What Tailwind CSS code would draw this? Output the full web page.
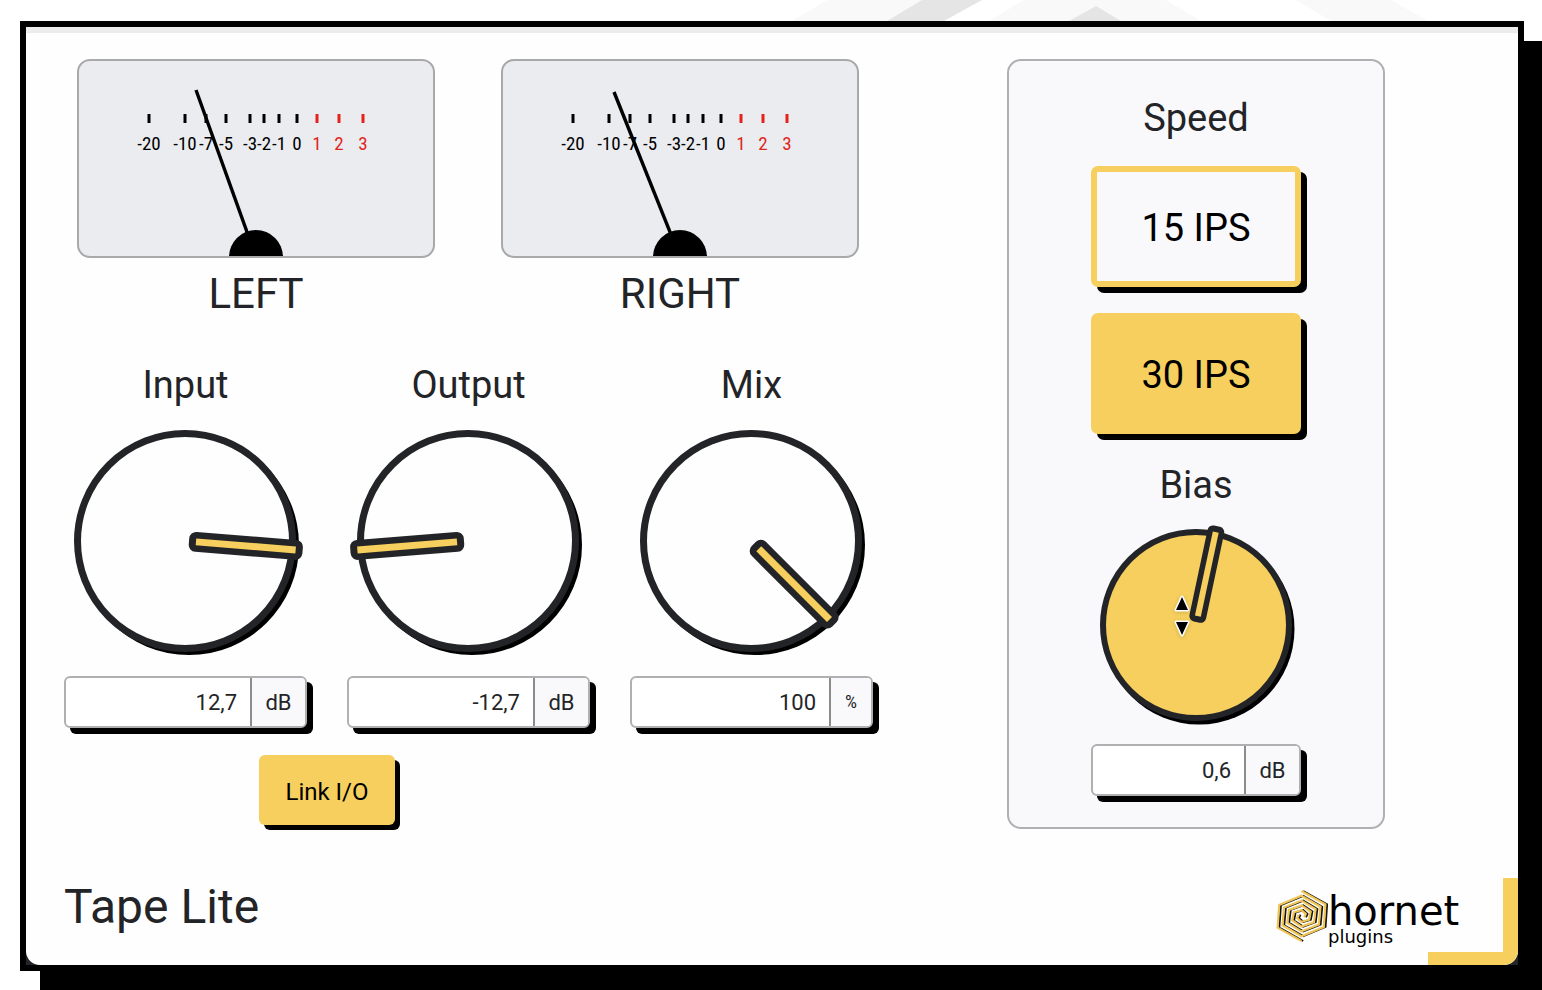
<!DOCTYPE html>
<html lang="en">
<head>
<meta charset="utf-8">
<title>Tape Lite</title>
<script src="https://cdn.jsdelivr.net/npm/@tailwindcss/browser@4"></script>
</head>
<body class="bg-white font-['Roboto',sans-serif] text-[#232427]">
<div class="relative min-h-screen overflow-hidden pt-[21px] pr-[18px] pl-5">
  <!-- background chevrons -->
  <svg class="absolute top-0 right-0 h-[40px] w-[782px]" viewBox="760 0 782 40" aria-hidden="true">
    <path fill="#f9f9f9" d="M827 0H922L887 21H792ZM1024 0H1166L1201 21H989ZM1296 0H1391L1428 21H1331Z"/>
    <path fill="#e5e5e5" d="M922 0H982L944 21H887ZM1096 6L1121 21H1069Z"/>
  </svg>

  <div class="relative border-[6px] border-black bg-[#232427] shadow-[20px_20px_0_#000]">
    <div class="relative overflow-hidden rounded-b-[14px] border-t-[6px] border-[#ececec] bg-[#fefefe]">
      <main class="flex items-start justify-between pt-[26px] pr-[133px] pl-[38px]">
        <section class="flex flex-col" aria-label="Levels">
          <div class="flex justify-center gap-[66px] pr-px">
            <figure class="w-[358px]">
              <div class="overflow-hidden rounded-[13px] border-2 border-[#a9a9ab] bg-[#ebecf0]">
                <svg class="block h-[195px] w-full" viewBox="2 2 354 195" role="img" aria-label="Left VU meter">
                  <path stroke="#000" stroke-width="3" d="M72 55v9M108 55v9M129 55v9M149 55v9M173 55v9M187 55v9M202 55v9M220 55v9"/>
                  <path stroke="#e0261c" stroke-width="3" d="M240 55v9M262 55v9M286 55v9"/>
                  <g class="font-['Liberation_Sans_Narrow','Roboto_Condensed',sans-serif] text-[19px]" text-anchor="middle">
                    <text x="72" y="91">-20</text><text x="108" y="91">-10</text><text x="129" y="91">-7</text><text x="149" y="91">-5</text><text x="173" y="91">-3</text><text x="187" y="91">-2</text><text x="202" y="91">-1</text><text x="220" y="91">0</text>
                    <g fill="#e0261c"><text x="240" y="91">1</text><text x="262" y="91">2</text><text x="286" y="91">3</text></g>
                  </g>
                  <path stroke="#000" stroke-width="3.4" d="M119 31L179 198"/>
                  <circle cx="179" cy="198" r="27"/>
                </svg>
              </div>
              <figcaption class="mt-4 text-center text-[42px] leading-10">LEFT</figcaption>
            </figure>
            <figure class="w-[358px]">
              <div class="overflow-hidden rounded-[13px] border-2 border-[#a9a9ab] bg-[#ebecf0]">
                <svg class="block h-[195px] w-full" viewBox="2 2 354 195" role="img" aria-label="Right VU meter">
                  <path stroke="#000" stroke-width="3" d="M72 55v9M108 55v9M129 55v9M149 55v9M173 55v9M187 55v9M202 55v9M220 55v9"/>
                  <path stroke="#e0261c" stroke-width="3" d="M240 55v9M262 55v9M286 55v9"/>
                  <g class="font-['Liberation_Sans_Narrow','Roboto_Condensed',sans-serif] text-[19px]" text-anchor="middle">
                    <text x="72" y="91">-20</text><text x="108" y="91">-10</text><text x="129" y="91">-7</text><text x="149" y="91">-5</text><text x="173" y="91">-3</text><text x="187" y="91">-2</text><text x="202" y="91">-1</text><text x="220" y="91">0</text>
                    <g fill="#e0261c"><text x="240" y="91">1</text><text x="262" y="91">2</text><text x="286" y="91">3</text></g>
                  </g>
                  <path stroke="#000" stroke-width="3.4" d="M113 33L179 198"/>
                  <circle cx="179" cy="198" r="27"/>
                </svg>
              </div>
              <figcaption class="mt-4 text-center text-[42px] leading-10">RIGHT</figcaption>
            </figure>
          </div>

          <div class="mt-[51px] flex gap-10">
            <div class="w-[243px]">
              <label for="input" class="block text-center text-[38px] leading-10">Input</label>
              <div class="relative mt-5">
                <svg class="block h-[236px] w-full overflow-visible" viewBox="0 0 243 236" aria-hidden="true">
                  <circle cx="125" cy="120" r="110"/>
                  <circle cx="121" cy="116" r="107.5" fill="#fefefe" stroke="#232427" stroke-width="7"/>
                  <g transform="translate(121 116) rotate(4.6)">
                    <rect x="4" y="-10" width="114" height="20" rx="7" fill="#232427"/>
                    <rect x="11" y="-3.5" width="100" height="7" fill="#f6cf5e"/>
                  </g>
                </svg>
                <input id="input" type="range" min="-24" max="24" step="0.1" value="12.7" class="absolute inset-0 h-full w-full opacity-0">
              </div>
              <div class="mt-[15px] flex h-[52px] overflow-hidden rounded-md border-2 border-[#b0b0b2] bg-white shadow-[6px_6px_0_#000]">
                <input type="text" value="12,7" aria-label="Input level" class="w-0 flex-1 pr-[13px] text-right text-[22px]">
                <span class="flex w-[55px] items-center justify-center border-l-2 border-[#8c8c8e] bg-[#f9f9fc] text-[22px]">dB</span>
              </div>
            </div>
            <div class="w-[243px]">
              <label for="output" class="block text-center text-[38px] leading-10">Output</label>
              <div class="relative mt-5">
                <svg class="block h-[236px] w-full overflow-visible" viewBox="0 0 243 236" aria-hidden="true">
                  <circle cx="125" cy="120" r="110"/>
                  <circle cx="121" cy="116" r="107.5" fill="#fefefe" stroke="#232427" stroke-width="7"/>
                  <g transform="translate(121 116) rotate(175.4)">
                    <rect x="4" y="-10" width="114" height="20" rx="7" fill="#232427"/>
                    <rect x="11" y="-3.5" width="100" height="7" fill="#f6cf5e"/>
                  </g>
                </svg>
                <input id="output" type="range" min="-24" max="24" step="0.1" value="-12.7" class="absolute inset-0 h-full w-full opacity-0">
              </div>
              <div class="mt-[15px] flex h-[52px] overflow-hidden rounded-md border-2 border-[#b0b0b2] bg-white shadow-[6px_6px_0_#000]">
                <input type="text" value="-12,7" aria-label="Output level" class="w-0 flex-1 pr-[13px] text-right text-[22px]">
                <span class="flex w-[55px] items-center justify-center border-l-2 border-[#8c8c8e] bg-[#f9f9fc] text-[22px]">dB</span>
              </div>
            </div>
            <div class="w-[243px]">
              <label for="mix" class="block text-center text-[38px] leading-10">Mix</label>
              <div class="relative mt-5">
                <svg class="block h-[236px] w-full overflow-visible" viewBox="0 0 243 236" aria-hidden="true">
                  <circle cx="125" cy="120" r="110"/>
                  <circle cx="121" cy="116" r="107.5" fill="#fefefe" stroke="#232427" stroke-width="7"/>
                  <g transform="translate(121 116) rotate(45)">
                    <rect x="4" y="-10" width="114" height="20" rx="7" fill="#232427"/>
                    <rect x="11" y="-3.5" width="100" height="7" fill="#f6cf5e"/>
                  </g>
                </svg>
                <input id="mix" type="range" min="0" max="100" value="100" class="absolute inset-0 h-full w-full opacity-0">
              </div>
              <div class="mt-[15px] flex h-[52px] overflow-hidden rounded-md border-2 border-[#b0b0b2] bg-white shadow-[6px_6px_0_#000]">
                <input type="text" value="100" aria-label="Mix amount" class="w-0 flex-1 pr-[13px] text-right text-[22px]">
                <span class="flex w-[42px] items-center justify-center border-l-2 border-[#8c8c8e] bg-[#f9f9fc] font-['Roboto_Condensed','Roboto',sans-serif] text-[19px]">%</span>
              </div>
            </div>
          </div>
          <div class="mt-[27px] flex w-[526px] justify-center">
            <button type="button" aria-pressed="true" class="h-[70px] w-[136px] rounded-md bg-[#f6cf5e] pt-[3px] text-2xl text-black shadow-[5px_5px_0_#000]">Link I/O</button>
          </div>
        </section>

        <section class="w-[378px] rounded-[14px] border-2 border-[#b0b0b2] bg-[#f9f9fc] px-[82px] pt-[37px] pb-[31px]" aria-label="Tape">
          <h2 class="text-center text-[38px] leading-10">Speed</h2>
          <button type="button" aria-pressed="false" class="mt-7 block h-[121px] w-full rounded-[7px] border-[6px] border-[#f6cf5e] bg-[#f9f9fc] pt-[3px] text-[38px] text-black shadow-[6px_6px_0_#000]">15 IPS</button>
          <button type="button" aria-pressed="true" class="mt-[26px] block h-[121px] w-full rounded-[7px] border-[6px] border-[#f6cf5e] bg-[#f6cf5e] pt-[3px] text-[38px] text-black shadow-[6px_6px_0_#000]">30 IPS</button>
          <label for="bias" class="mt-[31px] block text-center text-[38px] leading-10">Bias</label>
          <div class="relative mt-[15px]">
            <svg class="block h-[210px] w-full overflow-visible" viewBox="0 0 210 210" aria-hidden="true">
              <circle cx="108" cy="109" r="95.5"/>
              <circle cx="105" cy="105" r="93" fill="#f6cf5e" stroke="#232427" stroke-width="6"/>
              <g transform="translate(105 105) rotate(-78)">
                <rect x="3" y="-8.5" width="98" height="17" rx="5.5" fill="#232427"/>
                <rect x="9" y="-3" width="86" height="6" fill="#f6cf5e"/>
              </g>
              <path d="M91 77L97 90H85ZM91 115L85 102H97Z" stroke="#fff" stroke-width="3" stroke-linejoin="round" paint-order="stroke" class="drop-shadow-sm"/>
            </svg>
            <input id="bias" type="range" min="-6" max="6" step="0.1" value="0.6" class="absolute inset-0 h-full w-full opacity-0">
          </div>
          <div class="mt-[14px] flex h-[52px] overflow-hidden rounded-md border-2 border-[#b0b0b2] bg-white shadow-[6px_6px_0_#000]">
            <input type="text" value="0,6" aria-label="Bias level" class="w-0 flex-1 pr-[13px] text-right text-[22px]">
            <span class="flex w-[55px] items-center justify-center border-l-2 border-[#8c8c8e] bg-[#f9f9fc] text-[22px]">dB</span>
          </div>
        </section>
      </main>

      <footer class="mt-12 flex items-start justify-between pr-[39px] pb-5 pl-[38px]">
        <h1 class="text-5xl leading-[60px]">Tape Lite</h1>
        <a href="#" class="mt-3 flex text-black" aria-label="hornet plugins">
          <svg class="h-[54px] w-[53px]" viewBox="-27 -27 53 54" fill="none" aria-hidden="true">
            <path id="dark" stroke="#17130a" stroke-width="2"/>
            <path id="gold" stroke="#f0c558" stroke-width="2.2"/>
          </svg>
          <span class="flex w-[151px] flex-col pt-1 font-['DejaVu_Sans',sans-serif]">
            <span class="text-[40px] leading-9">hornet</span>
            <span class="text-lg leading-4">plugins</span>
          </span>
        </a>
      </footer>
      <div class="absolute right-0 bottom-0 h-[87px] w-[90px] rounded-br-[14px] border-r-[15px] border-b-[13px] border-[#f6cf5e]"></div>
    </div>
  </div>
</div>
<script>
  // Two-armed hexagonal spiral of the logo mark.
  function arm(start, radius, dx) {
    let d = '';
    for (let k = 0; k < 15; k++) {
      const a = (start + 60 * k) * Math.PI / 180, r = radius - k * 1.6;
      d += (k ? 'L' : 'M') + (Math.cos(a) * r * 1.18 + dx).toFixed(1) + ' ' + (Math.sin(a) * r).toFixed(1);
    }
    return d;
  }
  document.getElementById('gold').setAttribute('d', arm(-90, 25, -0.5) + arm(90, 25, -0.5));
  document.getElementById('dark').setAttribute('d', arm(-90, 25, 1.2) + arm(90, 25, 1.2));
</script>
</body>
</html>
